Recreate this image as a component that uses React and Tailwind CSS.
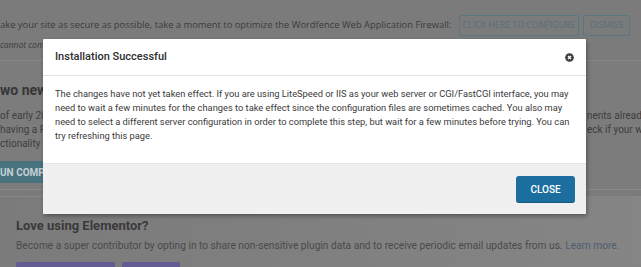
import React from "react";

export default function App() {
  return (
    <div className="relative w-[641px] h-[267px] overflow-hidden bg-[#7b7b7b] font-['Roboto',sans-serif]">
      {/* Wordfence notice */}
      <div className="h-[61px] border-b border-[#868686] bg-[#7b7b7b]">
        <div className="flex items-center justify-between pt-[15px] pr-[11px]">
          <p className="whitespace-nowrap font-['Open_Sans',sans-serif] text-[9.4px] text-[#3b3b3b]">
            ake your site as secure as possible, take a moment to optimize the Wordfence Web Application Firewall:
          </p>
          <div className="flex gap-[4px] font-['Open_Sans',sans-serif] text-[8.8px] text-[#56707d]">
            <span className="flex h-[21px] w-[120px] items-center justify-center rounded-[2px] border border-[#587886]">
              CLICK HERE TO CONFIGURE
            </span>
            <span className="flex h-[21px] w-[47px] items-center justify-center rounded-[2px] border border-[#587886]">
              DISMISS
            </span>
          </div>
        </div>
        <p className="mt-[3px] whitespace-nowrap font-['Open_Sans',sans-serif] text-[8.5px] italic leading-[12px] text-[#3b3b3b]">
          cannot complete the configuration automatically
        </p>
      </div>

      {/* Two new features section */}
      <div className="h-[129px] border-b border-[#888888] bg-[#7c7c7c] pt-[20px]">
        <h2 className="whitespace-nowrap text-[14px] font-bold leading-[18px] text-[#363636]">wo new features</h2>
        <div className="mt-[10px] text-[10px] leading-[14px] text-[#3e3e3e]">
          <div className="flex justify-between">
            <span className="whitespace-nowrap">of early 2023</span>
            <span className="w-[54px] overflow-hidden whitespace-nowrap">nents already</span>
          </div>
          <div className="flex justify-between">
            <span className="whitespace-nowrap">having a Pro</span>
            <span className="w-[54px] overflow-hidden whitespace-nowrap">eck if your website</span>
          </div>
          <div className="flex justify-between">
            <span className="whitespace-nowrap">ctionality</span>
          </div>
        </div>
        <div className="mt-[10px] flex h-[22px] w-[120px] items-center rounded-r-[3px] bg-[#4a7380] text-[10px] font-bold text-[#c4d0d4]">
          UN COMPLETE SETUP
        </div>
      </div>

      {/* Elementor card */}
      <div className="mt-[6px] border-t border-[#868686] bg-gradient-to-r from-[#7b7b7b] to-[#858585] pl-[16px] pt-[20px]">
        <h3 className="text-[13px] font-bold leading-[18px] text-[#3a3a3a]">Love using Elementor?</h3>
        <p className="mt-[4px] whitespace-nowrap text-[10.2px] leading-[14px] text-[#4a4a4a]">
          Become a super contributor by opting in to share non-sensitive plugin data and to receive periodic email updates from us.{" "}
          <span className="text-[#4d5d70]">Learn more.</span>
        </p>
        <div className="mt-[9px] flex gap-[7px]">
          <span className="h-[10px] w-[99px] rounded-[2px] bg-[#615d92]"></span>
          <span className="h-[10px] w-[58px] rounded-[2px] bg-[#615d92]"></span>
        </div>
      </div>

      {/* Modal */}
      <div className="absolute left-[43px] top-[39px] flex h-[175px] w-[543px] flex-col overflow-hidden rounded-[1px] bg-white shadow-[1px_2px_4px_rgba(0,0,0,0.35)]">
        <div className="flex h-[37px] items-center justify-between border-b border-[#e2e2e2] pl-[12px] pr-[12px]">
          <span className="text-[11px] font-medium text-[#2e2e2e]">Installation Successful</span>
          <svg width="9" height="9" viewBox="0 0 10 10">
            <circle cx="5" cy="5" r="4.8" fill="#3d3d3d" />
            <path d="M3.3 3.3 L6.7 6.7 M6.7 3.3 L3.3 6.7" stroke="#fff" strokeWidth="1.5" />
          </svg>
        </div>
        <div className="h-[87px] px-[12px] pt-[11px] text-[9.3px] leading-[14px] text-[#3a3a3a]">
          The changes have not yet taken effect. If you are using LiteSpeed or IIS as your web server or CGI/FastCGI interface, you may need to wait a few minutes for the changes to take effect since the configuration files are sometimes cached. You also may need to select a different server configuration in order to complete this step, but wait for a few minutes before trying. You can try refreshing this page.
        </div>
        <div className="flex flex-1 items-start justify-end border-t border-[#e4e4e4] bg-[#f0f0f0] pr-[11px] pt-[12px]">
          <button className="flex h-[27px] w-[59px] items-center justify-center rounded-[3px] border-b border-[#155a82] bg-[#1b6e9e] text-[10px] font-medium text-white">
            CLOSE
          </button>
        </div>
      </div>
    </div>
  );
}
